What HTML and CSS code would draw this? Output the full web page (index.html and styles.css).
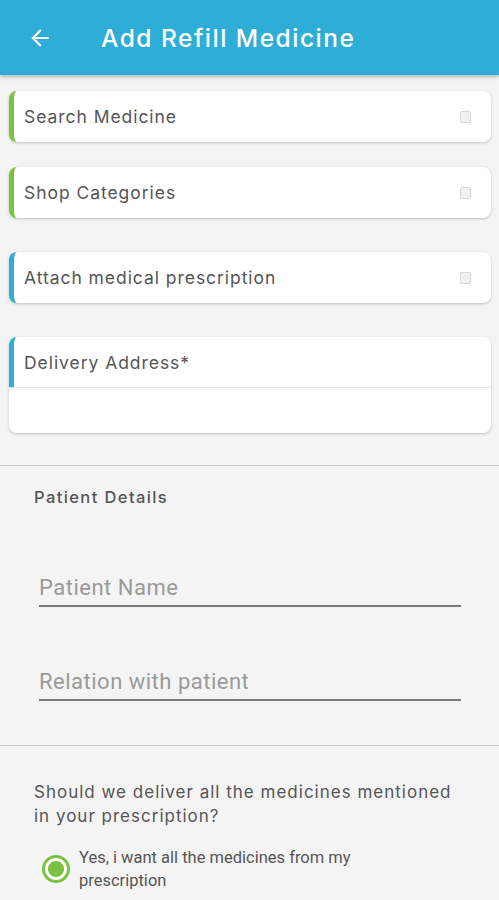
FILE: index.html
```html
<!DOCTYPE html>
<html lang="en">
<head>
  <meta charset="UTF-8" />
  <meta name="viewport" content="width=device-width, initial-scale=1.0"/>
  <title>Add Refill Medicine</title>
  <link rel="stylesheet" href="styles.css">
</head>
<body>

  <!-- App bar -->
  <header class="app-bar">
    <svg class="back" width="24" height="24" viewBox="0 0 24 24">
      <path d="M20 11H7.83l5.59-5.59L12 4l-8 8 8 8 1.41-1.41L7.83 13H20v-2z" fill="#ffffff"/>
    </svg>
    <h1>Add Refill Medicine</h1>
  </header>

  <div class="cards">
    <div class="card green">
      <span>Search Medicine</span>
      <i class="attach"></i>
    </div>
    <div class="card green">
      <span>Shop Categories</span>
      <i class="attach"></i>
    </div>
    <div class="card blue gap">
      <span>Attach medical prescription</span>
      <i class="attach"></i>
    </div>
    <div class="address gap">
      <div class="card blue flat">
        <span>Delivery Address*</span>
      </div>
      <div class="address-body"></div>
    </div>
  </div>

  <section class="patient">
    <h2>Patient Details</h2>
    <div class="field">Patient Name</div>
    <div class="field">Relation with patient</div>
  </section>

  <section class="question">
    <p>Should we deliver all the medicines mentioned in your prescription?</p>
    <label class="radio">
      <span class="dot"></span>
      <span class="radio-text">Yes, i want all the medicines from my prescription</span>
    </label>
  </section>

</body>
</html>
```

FILE: styles.css
```css
body {
  margin: 0;
  background: #f4f4f4;
  font-family: 'Inter', 'Open Sans', sans-serif;
  color: #555555;
}

.app-bar {
  height: 75px;
  background: #2eadd6;
  display: flex;
  align-items: center;
  padding-left: 27px;
  box-shadow: 0 2px 4px rgba(0, 0, 0, 0.25);
}

.app-bar .back {
  width: 26px;
  height: 26px;
}

.app-bar h1 {
  margin: 0 0 0 48px;
  color: #ffffff;
  font-size: 24.5px;
  font-weight: 500;
  letter-spacing: 1.5px;
}

.cards {
  padding: 16px 8px 0 9px;
}

.card {
  height: 51px;
  background: #ffffff;
  border-radius: 8px;
  border-left: 5px solid #7cc242;
  box-shadow: 0 1px 3px rgba(0, 0, 0, 0.22);
  display: flex;
  align-items: center;
  justify-content: space-between;
  padding: 0 20px 0 10px;
  margin-bottom: 25px;
  font-size: 17.5px;
  letter-spacing: 0.95px;
}

.card.blue {
  border-left-color: #2eadd6;
}

.gap {
  margin-top: 34px;
}

.card.gap {
  margin-top: 34px;
}

.attach {
  width: 9px;
  height: 10px;
  border: 1px solid #d6d6d6;
  border-radius: 2px;
  background: #f1f1f1;
}

.address {
  background: #ffffff;
  border-radius: 8px;
  box-shadow: 0 1px 3px rgba(0, 0, 0, 0.22);
  margin-bottom: 32px;
}

.address .card {
  margin: 0;
  box-shadow: none;
  border-radius: 8px 8px 0 0;
  height: 50px;
}

.address-body {
  height: 45px;
  border-top: 1px solid #e4e4e4;
}

.patient {
  border-top: 1px solid #c9c9c9;
  padding: 21px 38px 44px 34px;
}

.patient h2 {
  margin: 0 0 68px;
  font-size: 16.5px;
  font-weight: 500;
  letter-spacing: 1.4px;
}

.field {
  margin: 0 0 62px 5px;
  padding-bottom: 5px;
  border-bottom: 2px solid #7a7a7a;
  font-family: 'Roboto', sans-serif;
  font-size: 22px;
  letter-spacing: 0.5px;
  color: #9a9a9a;
}

.field:last-child {
  margin-bottom: 0;
}

.question {
  border-top: 1px solid #c9c9c9;
  padding: 34px 30px 0 34px;
}

.question p {
  max-width: 430px;
  margin: 0 0 18px;
  font-size: 17px;
  line-height: 24px;
  letter-spacing: 1px;
}

.radio {
  display: flex;
  align-items: center;
  gap: 9px;
  margin-left: 8px;
  font-family: 'Roboto', sans-serif;
  font-size: 16.5px;
  line-height: 23px;
}

.radio-text {
  max-width: 280px;
}

.radio .dot {
  flex: none;
  width: 22px;
  height: 22px;
  border: 3px solid #7cc242;
  border-radius: 50%;
  background: radial-gradient(circle, #7cc242 0 7.5px, #ffffff 8.5px);
}
```
